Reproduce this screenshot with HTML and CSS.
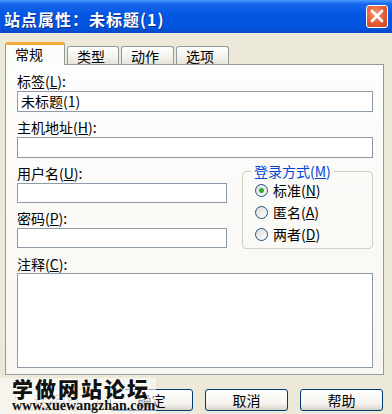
FILE: index.html
```html
<!DOCTYPE html>
<html lang="zh-CN">
<head>
  <meta charset="UTF-8">
  <meta name="viewport" content="width=device-width, initial-scale=1.0">
  <title>站点属性</title>
  <link rel="stylesheet" href="styles.css">
</head>
<body>
  <div class="window">
    <!-- Title bar -->
    <div class="titlebar">
      <span class="title">站点属性：未标题(1)</span>
      <span class="close-btn">
        <svg width="14" height="14" viewBox="0 0 14 14">
          <path d="M2 2 L12 12 M12 2 L2 12" stroke="#fff" stroke-width="2.6" stroke-linecap="round"/>
        </svg>
      </span>
    </div>

    <div class="dialog">
      <!-- Tabs -->
      <div class="tabs">
        <div class="tab active">常规</div>
        <div class="tab">类型</div>
        <div class="tab wide">动作</div>
        <div class="tab wide">选项</div>
      </div>

      <!-- Tab page -->
      <div class="panel">
        <div class="field-label">标签(<u>L</u>):</div>
        <div class="textbox">未标题(1)</div>

        <div class="field-label">主机地址(<u>H</u>):</div>
        <div class="textbox"></div>

        <div class="split">
          <div class="left-col">
            <div class="field-label">用户名(<u>U</u>):</div>
            <div class="textbox short"></div>
            <div class="field-label">密码(<u>P</u>):</div>
            <div class="textbox short"></div>
          </div>

          <fieldset class="group">
            <legend>登录方式(<u>M</u>)</legend>
            <div class="radio-row"><span class="radio checked"></span><span>标准(<u>N</u>)</span></div>
            <div class="radio-row"><span class="radio"></span><span>匿名(<u>A</u>)</span></div>
            <div class="radio-row"><span class="radio"></span><span>两者(<u>D</u>)</span></div>
          </fieldset>
        </div>

        <div class="field-label note">注释(<u>C</u>):</div>
        <div class="textbox memo"></div>
      </div>

      <!-- Buttons -->
      <div class="buttons">
        <button class="btn disabled">连接(<u>E</u>)</button>
        <button class="btn">确定</button>
        <button class="btn">取消</button>
        <button class="btn">帮助</button>
      </div>
    </div>

    <!-- Site watermark over the corner -->
    <div class="watermark">
      <div class="wm-title">学做网站论坛</div>
      <div class="wm-url">www.xuewangzhan.com</div>
    </div>
  </div>
</body>
</html>
```

FILE: styles.css
```css
body {
  margin: 0;
  background-color: #ece9d8;
  font-family: "Noto Sans CJK SC", "Noto Sans", sans-serif;
  font-size: 14px;
  color: #000;
}

.window {
  position: relative;
  width: 392px;
  height: 414px;
  overflow: hidden;
  background-color: #ece9d8;
}

.titlebar {
  height: 33px;
  display: flex;
  align-items: center;
  justify-content: space-between;
  padding: 0 4px 0 4px;
  box-sizing: border-box;
  background: linear-gradient(#4a9bff 0%, #1667ec 12%, #0456e2 45%, #0353de 85%, #0848c6 100%);
}

.title {
  color: #fff;
  font-weight: bold;
  font-size: 16px;
  line-height: 20px;
  padding-top: 5px;
  letter-spacing: 1px;
  text-shadow: 1px 1px 0 #0a2f8a;
}

.close-btn {
  width: 20px;
  height: 21px;
  margin-bottom: 1px;
  border: 1px solid #fff;
  border-radius: 3px;
  background: radial-gradient(circle at 40% 35%, #f49a74 0%, #e35b33 55%, #c9401c 100%);
  display: flex;
  align-items: center;
  justify-content: center;
}

.dialog {
  padding: 9px 8px 0 5px;
}

.tabs {
  display: flex;
  align-items: flex-end;
  gap: 2px;
  position: relative;
  z-index: 1;
}

.tab {
  width: 52px;
  height: 18px;
  line-height: 18px;
  padding-left: 9px;
  box-sizing: border-box;
  border: 1px solid #919b9c;
  border-bottom: none;
  border-radius: 3px 3px 0 0;
  background: linear-gradient(#ffffff, #f3f2ee 60%, #e6e4dc);
  font-size: 14px;
}

.tab.wide {
  width: 53px;
}

.tab.active {
  width: 60px;
  height: 23px;
  line-height: 19px;
  padding-left: 9px;
  margin-bottom: -1px;
  border-top: 3px solid #f5a93e;
  background: #fcfcfb;
}

.panel {
  width: 379px;
  box-sizing: border-box;
  border: 1px solid #919b9c;
  background: linear-gradient(#fdfdfc, #f7f6f2);
  padding: 1px 10px 6px 11px;
}

.field-label {
  padding-top: 5px;
  line-height: 20px;
}

.field-label.note {
  padding-top: 7px;
  line-height: 18px;
}

u {
  text-decoration: underline;
}

.textbox {
  height: 21px;
  box-sizing: border-box;
  border: 1px solid #8d9aa8;
  background: #fff;
  padding-left: 3px;
  line-height: 19px;
}

.textbox.short {
  width: 210px;
  height: 20px;
  line-height: 18px;
}

.textbox.memo {
  height: 95px;
}

.split {
  display: flex;
  align-items: flex-start;
}

.left-col {
  width: 210px;
}

.group {
  flex: 1;
  margin: 5px 0 -3px 15px;
  padding: 0 0 3px 12px;
  border: 1px solid #d0d0bf;
  border-radius: 4px;
  min-width: 0;
}

.group legend {
  margin-left: -4px;
  padding: 0 3px;
  color: #0046d5;
  line-height: 16px;
}

.radio-row {
  display: flex;
  align-items: center;
  height: 22px;
  gap: 5px;
}

.radio {
  width: 13px;
  height: 13px;
  box-sizing: border-box;
  border: 1px solid #1c5180;
  border-radius: 50%;
  background: linear-gradient(135deg, #dcdcd7, #ffffff);
  display: flex;
  align-items: center;
  justify-content: center;
}

.radio.checked::after {
  content: "";
  width: 5px;
  height: 5px;
  border-radius: 50%;
  background: #2fa82f;
}

.buttons {
  display: flex;
  justify-content: flex-end;
  gap: 12px;
  margin-top: 14px;
  padding-right: 1px;
}

.btn {
  width: 83px;
  height: 22px;
  padding: 0;
  border: 1px solid #003c74;
  border-radius: 3px;
  background: linear-gradient(#ffffff, #f4f3ee 70%, #d8d2c6);
  font-family: "Noto Sans CJK SC", "Noto Sans", sans-serif;
  font-size: 14px;
  line-height: 20px;
  color: #000;
}

.btn.disabled {
  color: #a6a394;
  border-color: #c9c7ba;
}

.watermark {
  position: absolute;
  left: 0;
  bottom: 0;
  width: 156px;
  height: 36px;
  padding-left: 12px;
  box-sizing: border-box;
  background: rgba(255, 255, 255, 0.55);
}

.wm-title {
  font-size: 21px;
  line-height: 21px;
  font-weight: 900;
  letter-spacing: 2px;
  color: #111;
  text-shadow: 1px 1px 0 #fff, -1px -1px 0 #fff;
}

.wm-url {
  font-family: "Liberation Serif", serif;
  font-weight: bold;
  font-size: 14px;
  line-height: 14px;
  color: #111;
}
```
